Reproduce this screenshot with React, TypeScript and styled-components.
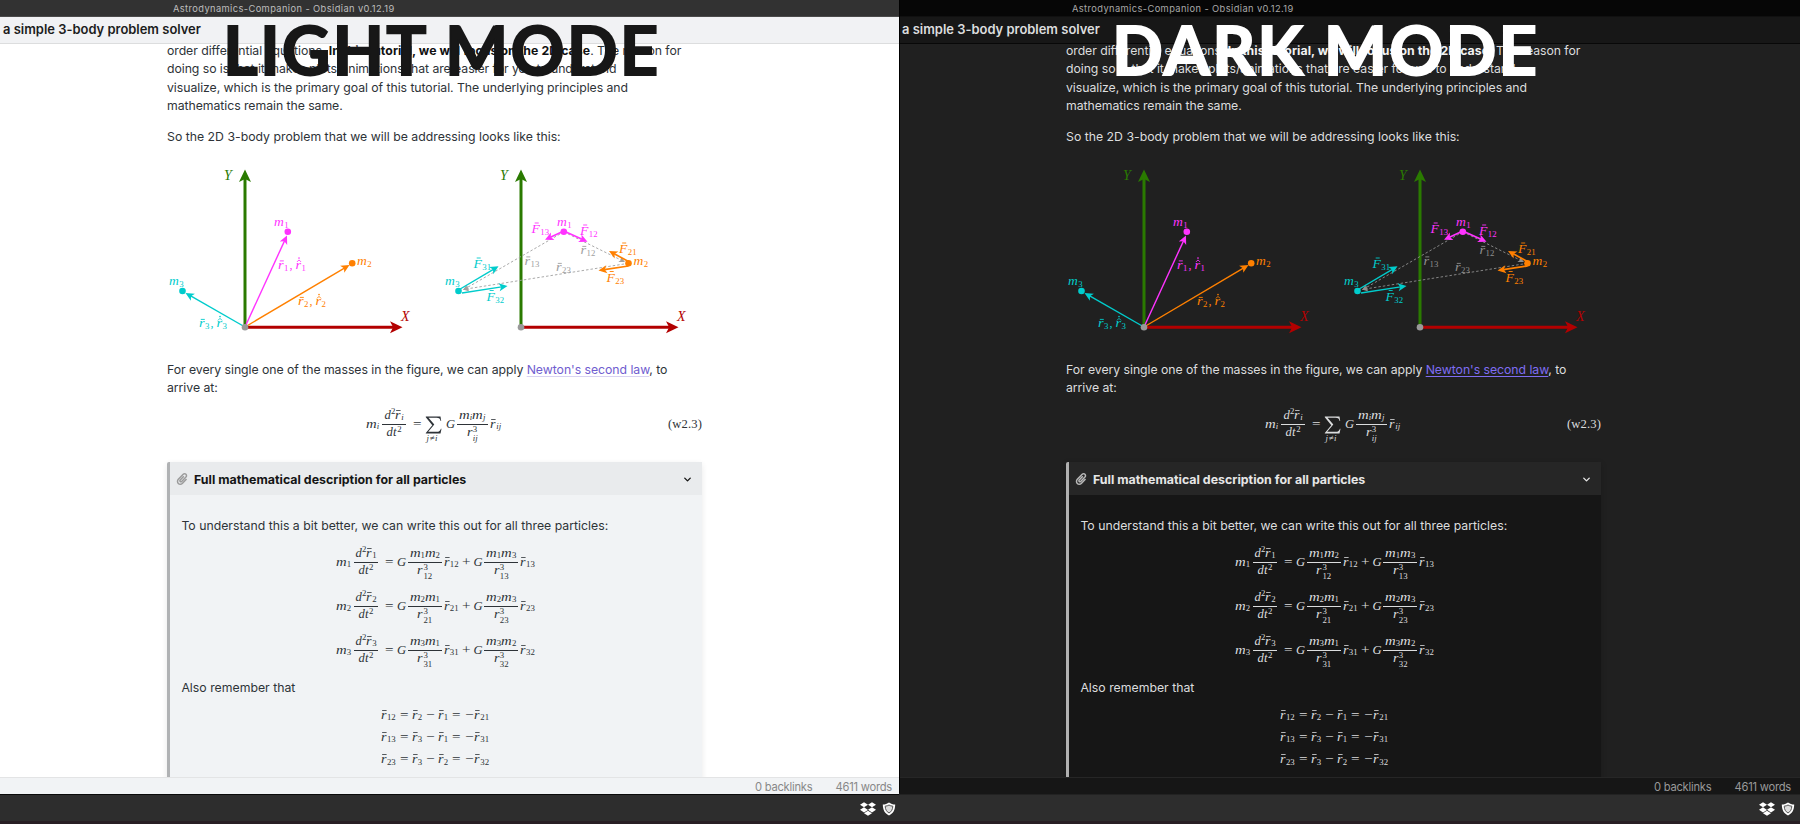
import React from "react";
import styled, { createGlobalStyle, ThemeProvider } from "styled-components";
import { FaDropbox, FaPaperclip } from "react-icons/fa";
import { ChevronDown } from "lucide-react";

const light = {
  title: "#323232", titleText: "#bdbdbd", titleLine: "#4a4a4a", header: "#f1f2f4", headerText: "#1c1c1c", headerLine: "#dcddde",
  bg: "#ffffff", text: "#2e3338", bold: "#111111", link: "#705dcf", underline: "#d9d3f2",
  card: "#f1f3f5", cardHead: "#e9ebed", cardBar: "#b0b2b4", cardTitle: "#151515", clip: "#9b9b9b",
  shadow: "0 2px 6px rgba(0,0,0,.09)", status: "#f1f3f5", statusLine: "#e3e4e5", statusText: "#888888",
  banner: "#171717", divider: "transparent", taskLine: "#0a0a0a", dash: "#a0a0a0", inset: 0,
};
const dark: typeof light = {
  title: "#060606", titleText: "#a8a8a8", titleLine: "#101010", header: "#171717", headerText: "#dcddde", headerLine: "#080808",
  bg: "#202020", text: "#dcddde", bold: "#f2f2f2", link: "#7f6df2", underline: "#7f6df2",
  card: "#161616", cardHead: "#262626", cardBar: "#b0b0b0", cardTitle: "#e6e6e6", clip: "#b8b8b8",
  shadow: "0 2px 6px rgba(0,0,0,.2)", status: "#161616", statusLine: "#262626", statusText: "#999999",
  banner: "#ffffff", divider: "#000000", taskLine: "#222222", dash: "#8f8f8f", inset: 2,
};
type Skin = typeof light;

const Global = createGlobalStyle`
  * { box-sizing: border-box; }
  body { margin: 0; width: 1800px; height: 824px; overflow: hidden; font-family: Inter, "Liberation Sans", sans-serif; }
`;
const Screen = styled.div`display: flex; width: 1800px; height: 824px; overflow: hidden;`;
const Window = styled.section<{ $w: number; theme: Skin }>`
  position: relative; display: flex; flex-direction: column; width: ${p => p.$w}px; height: 824px; overflow: hidden;
  background: ${p => p.theme.bg}; color: ${p => p.theme.text};
`;
const TitleBar = styled.div<{ theme: Skin }>`
  flex: none; height: 17px; padding-left: 173px; line-height: 18px; font-size: 9.3px; letter-spacing: .4px; white-space: nowrap;
  background: ${p => p.theme.title}; color: ${p => p.theme.titleText}; border-bottom: 1px solid ${p => p.theme.titleLine};
`;
const Header = styled.div<{ theme: Skin }>`
  flex: none; height: 27px; padding-left: 3px; line-height: 25px; font-size: 12.95px; font-weight: 600; white-space: nowrap;
  background: ${p => p.theme.header}; color: ${p => p.theme.headerText}; border-bottom: 1px solid ${p => p.theme.headerLine};
`;
const Article = styled.main`flex: 1; min-height: 0; margin-left: 167px; width: 535px; clip-path: inset(0 -12px 0 -12px);`;
const P = styled.p<{ $top?: number; $ls?: number; theme: Skin }>`
  margin: ${p => p.$top || 0}px 0 0; font-size: 12.29px; line-height: 18.33px; letter-spacing: ${p => p.$ls || 0}px; white-space: nowrap;
  b { color: ${p => p.theme.bold}; font-weight: 700; letter-spacing: .07px; }
`;
const Link = styled.a<{ theme: Skin }>`color: ${p => p.theme.link}; text-decoration: underline; text-decoration-color: ${p => p.theme.underline}; text-underline-offset: 2px;`;
const Figure = styled.svg`display: block; width: 534px; height: 195px; margin-top: 5.7px; overflow: visible;`;
const Card = styled.section<{ theme: Skin }>`
  height: 340px; margin-top: 12.5px; border-left: 3px solid ${p => p.theme.cardBar}; border-radius: 2px; background: ${p => p.theme.card}; box-shadow: ${p => p.theme.shadow};
`;
const CardHead = styled.header<{ theme: Skin }>`
  display: flex; align-items: center; height: 33px; padding: 1px 9px 0 5.5px; background: ${p => p.theme.cardHead}; color: ${p => p.theme.cardTitle};
  font-size: 12.42px; font-weight: 700; white-space: nowrap;
  .clip { color: ${p => p.theme.clip}; margin-right: 6.5px; }
  .chev { margin-left: auto; }
`;
const CardBody = styled.div`padding: 21.3px 0 0 11.4px;`;
const Derivation = styled.div<{ $top: number }>`padding-top: ${p => p.$top}px;`;
const Status = styled.footer<{ theme: Skin }>`
  flex: none; display: flex; justify-content: flex-end; gap: 23px; height: 17px; line-height: 18px; padding-right: ${p => 7 + p.theme.inset}px; font-size: 11.2px; letter-spacing: -.23px; white-space: nowrap;
  background: ${p => p.theme.status}; border-top: 1px solid ${p => p.theme.statusLine}; color: ${p => p.theme.statusText};
`;
const Task = styled.div<{ theme: Skin }>`
  flex: none; display: flex; align-items: center; justify-content: flex-end; gap: 6px; height: 30px; padding: 1px ${p => 3 + p.theme.inset}px 0 0; background: #2d2d2d; color: #fff; border-top: 1px solid ${p => p.theme.taskLine}; border-bottom: 3px solid #281f24;
`;
const Divider = styled.i<{ theme: Skin }>`position: absolute; left: 0; top: 0; width: 1px; height: 793px; background: ${p => p.theme.divider};`;
const Banner = styled.h1<{ $x: number; theme: Skin }>`
  position: absolute; left: ${p => p.$x}px; top: 1px; margin: 0; font: 700 67px/96px Lato, sans-serif; letter-spacing: 2.1px;
  -webkit-text-stroke: 1.8px ${p => p.theme.banner}; color: ${p => p.theme.banner}; white-space: nowrap;
`;

/* math typesetting */
const Eq = styled.div<{ $h: number; $left: number; $drop?: number }>`
  display: flex; align-items: center; height: ${p => p.$h}px; padding: ${p => p.$drop || 0}px 0 0 ${p => p.$left}px; font: 12.6px/16px "Liberation Serif", serif;
`;
const Glyph = styled.span<{ $w: number; $sx?: number; $up?: boolean; $ml?: number }>`
  flex: none; display: inline-block; width: ${p => p.$w}px; margin: -2px 0 0 ${p => p.$ml || 0}px; font-style: ${p => (p.$up ? "normal" : "italic")};
  transform: scaleX(${p => p.$sx || 1}); transform-origin: 0 50%; white-space: nowrap;
`;
const SubText = styled.span<{ $it?: boolean }>`
  flex: none; margin-top: 3px; font-size: 8.8px; line-height: 10px; font-style: ${p => (p.$it ? "italic" : "normal")};
`;
const SupText = styled(SubText)`margin-top: -9px;`;
const Stack = styled.span<{ $it?: boolean }>`
  display: flex; flex-direction: column; margin-left: 1px; font-size: 8.8px; line-height: 8.6px; margin-top: 1px;
  i { font-style: ${p => (p.$it ? "italic" : "normal")}; }
  span { font-style: normal; }
`;
const Barred = styled(Glyph)`
  position: relative;
  &::before { content: ""; position: absolute; left: 1px; top: 3px; width: 4px; height: 1px; background: currentColor; opacity: .8; }
`;
const Fraction = styled.span<{ $w: number; $ml: number }>`
  flex: none; display: flex; flex-direction: column; width: ${p => p.$w}px; margin-left: ${p => p.$ml}px;
  > span { display: flex; align-items: center; justify-content: center; height: 17px; }
  > span:first-child { border-bottom: 1px solid currentColor; }
`;
const SumBox = styled.span`
  flex: none; position: relative; width: 17px; height: 18px; margin-left: 4px; 
  svg { display: block; }
  small { position: absolute; left: 1px; top: 17px; font: italic 8.8px/10px "Liberation Serif", serif; letter-spacing: .6px; white-space: nowrap; }
`;
const Tag = styled.span`margin-left: auto; margin-top: -2px; font-size: 12.6px; letter-spacing: .15px;`;

const M = ({ s, it }: { s: string; it?: boolean }) => <><Glyph $w={10.8} $sx={1.17}>m</Glyph><SubText $it={it}>{s}</SubText></>;
const R = ({ s, ml, it }: { s: string; ml?: number; it?: boolean }) => <><Barred $w={5.9} $ml={ml} $sx={1.12}>r</Barred><SubText $it={it}>{s}</SubText></>;
const Acc = ({ s, it }: { s: string; it?: boolean }) => (
  <Fraction $w={24.7} $ml={2.5}>
    <span><Glyph $w={6.6}>d</Glyph><SupText>2</SupText><R s={s} it={it} /></span>
    <span><Glyph $w={6.4}>d</Glyph><Glyph $w={4.2}>t</Glyph><SupText>2</SupText></span>
  </Fraction>
);
const Mass = ({ a, b, s, w, it }: { a: string; b: string; s: string; w: number; it?: boolean }) => (
  <Fraction $w={w} $ml={1.4}>
    <span><M s={a} it={it} /><M s={b} it={it} /></span>
    <span><Glyph $w={5} $sx={1.12}>r</Glyph><Stack $it={it}><span>3</span><i>{s}</i></Stack></span>
  </Fraction>
);
const Op = ({ c, ml, w = 8.5 }: { c: string; ml: number; w?: number }) => <Glyph $up $w={w} $ml={ml} $sx={1.2}>{c}</Glyph>;
const G = ({ ml }: { ml: number }) => <Glyph $w={9.2} $ml={ml}>G</Glyph>;

const Particle = ({ n, o, q }: { n: string; o: string; q: string }) => (
  <Eq $h={44.1} $left={154.6} $drop={3}>
    <M s={n} /><Acc s={n} /><Op c="=" ml={6.8} /><G ml={3.3} /><Mass a={n} b={o} s={n + o} w={34.5} />
    <R s={n + o} ml={1.8} /><Op c="+" ml={3.6} /><G ml={2.8} /><Mass a={n} b={q} s={n + q} w={34.3} /><R s={n + q} ml={1.8} />
  </Eq>
);
const Relation = ({ a, b }: { a: string; b: string }) => (
  <Eq $h={22.2} $left={199.6}>
    <R s={a + b} /><Op c="=" ml={4} /><R s={b} ml={3.8} /><Op c="−" ml={4} /><R s={a} ml={3} /><Op c="=" ml={4} /><Op c="−" ml={4.6} /><R s={b + a} ml={0.8} />
  </Eq>
);

/* vector diagrams */
const pink = "#ff33ff", orange = "#ff8000", cyan = "#00cccc", green = "#2a7a00", red = "#b30000";
const Arrow = ({ a, b, c, w = 1.4, h = 8.5, dash }: { a: number[]; b: number[]; c: string; w?: number; h?: number; dash?: boolean }) => {
  const ang = Math.atan2(b[1] - a[1], b[0] - a[0]);
  const ex = b[0] - Math.cos(ang) * h * 0.7, ey = b[1] - Math.sin(ang) * h * 0.7;
  return (
    <g>
      <line x1={a[0]} y1={a[1]} x2={ex} y2={ey} stroke={c} strokeWidth={w} strokeDasharray={dash ? "2.5 2" : undefined} />
      <path transform={`translate(${b[0]} ${b[1]}) rotate(${(ang * 180) / Math.PI})`} fill={c} d={`M0 0L${-h} ${-h * 0.48}L${-h * 0.75} 0L${-h} ${h * 0.48}Z`} />
    </g>
  );
};
const Label = ({ x, y, c, t, s, bar }: { x: number; y: number; c: string; t: string; s?: string; bar?: boolean }) => {
  const w = t === "m" ? 9.8 : t === "F" ? 8.4 : t === "r" ? 5.6 : 9;
  return (
    <g fill={c} stroke="none" fontFamily='"Liberation Serif", serif'>
      <text x={x} y={y} fontSize={s ? 12.4 : 14} fontStyle="italic" textLength={s ? w : undefined} lengthAdjust="spacingAndGlyphs">{t}</text>
      {s && <text x={x + w + 0.4} y={y + 2} fontSize="8.8">{s}</text>}
      {bar && <line x1={x + w / 2 - 1} x2={x + w / 2 + 3} y1={y - (t === "F" ? 10 : 7.6)} y2={y - (t === "F" ? 10 : 7.6)} stroke={c} strokeWidth=".9" />}
    </g>
  );
};
const State = ({ x, y, c, s }: { x: number; y: number; c: string; s: string }) => (
  <g fill={c}>
    <Label x={x} y={y} c={c} t="r" s={s} bar />
    <text x={x + 11.5} y={y} fontSize="12" fontFamily='"Liberation Serif", serif'>,</text>
    <Label x={x + 17.5} y={y} c={c} t="r" s={s} />
    <path d={`M${x + 19} ${y - 6.6}l2-2 2 2`} fill="none" stroke={c} strokeWidth=".9" /><circle cx={x + 21} cy={y - 10.4} r=".8" />
  </g>
);
const Axes = ({ x }: { x: number }) => (
  <g>
    <Arrow a={[x, 327.3]} b={[x + 157.5, 327.3]} c={red} w={3} h={12.5} />
    <Arrow a={[x, 327.3]} b={[x, 169.5]} c={green} w={3} h={12.5} />
    <Label x={x - 21} y={180} c={green} t="Y" /><Label x={x + 156} y={321} c={red} t="X" />
  </g>
);
const Dot = ({ p, c }: { p: number[]; c: string }) => <circle cx={p[0]} cy={p[1]} r="3.3" fill={c} />;
const Diagram = ({ dash }: { dash: string }) => (
  <Figure viewBox="167 152 534 195">
    <Axes x={245} />
    <Arrow a={[245, 327]} b={[287, 235.5]} c={pink} /><Arrow a={[245, 327]} b={[349.5, 265]} c={orange} /><Arrow a={[245, 327]} b={[185.5, 293]} c={cyan} />
    <Dot p={[245, 327.3]} c="#999" /><Dot p={[287.8, 231.8]} c={pink} /><Dot p={[352.2, 263.3]} c={orange} /><Dot p={[182.5, 291]} c={cyan} />
    <Label x={274} y={226} c={pink} t="m" s="1" /><Label x={357} y={264.5} c={orange} t="m" s="2" /><Label x={169} y={285} c={cyan} t="m" s="3" />
    <State x={278} y={268.5} c={pink} s="1" /><State x={298} y={305} c={orange} s="2" /><State x={199} y={327} c={cyan} s="3" />
    <Axes x={521} />
    <Arrow a={[563.8, 231.8]} b={[463, 290]} c={dash} w={0.9} h={6} dash /><Arrow a={[628.5, 263.3]} b={[463, 289.5]} c={dash} w={0.9} h={6} dash /><Arrow a={[563.8, 231.8]} b={[625, 262]} c={dash} w={0.9} h={6} dash />
    <Arrow a={[563.8, 231]} b={[545, 239.8]} c={pink} w={1.7} /><Arrow a={[563.8, 231]} b={[587.5, 241.8]} c={pink} w={1.7} />
    <Arrow a={[628.5, 261.5]} b={[609, 251]} c={orange} w={1.7} /><Arrow a={[628.5, 266]} b={[598.5, 270.5]} c={orange} w={1.7} />
    <Arrow a={[458.5, 290]} b={[498.5, 266.3]} c={cyan} /><Arrow a={[462, 293]} b={[507.5, 286]} c={cyan} />
    <Dot p={[521, 327.3]} c="#999" /><Dot p={[563.8, 231.8]} c={pink} /><Dot p={[628.5, 263.3]} c={orange} /><Dot p={[458.5, 291]} c={cyan} />
    <Label x={557} y={226} c={pink} t="m" s="1" /><Label x={633.5} y={264.5} c={orange} t="m" s="2" /><Label x={445} y={284.5} c={cyan} t="m" s="3" />
    <Label x={531.5} y={233} c={pink} t="F" s="13" bar /><Label x={580} y={235} c={pink} t="F" s="12" bar />
    <Label x={619} y={253} c={orange} t="F" s="21" bar /><Label x={606.5} y={281.5} c={orange} t="F" s="23" bar />
    <Label x={473.5} y={268} c={cyan} t="F" s="31" bar /><Label x={486.5} y={300.5} c={cyan} t="F" s="32" bar />
    <Label x={580.5} y={254} c={dash} t="r" s="12" bar /><Label x={524.5} y={264.5} c={dash} t="r" s="13" bar /><Label x={556} y={271} c={dash} t="r" s="23" bar />
  </Figure>
);

const Shield = () => (
  <svg width="14" height="14" viewBox="0 0 14 14">
    <path d="M7 .5C5.3 1.8 3 2.5.8 2.6 1 8 2.5 11.3 7 13.6 11.5 11.3 13 8 13.2 2.6 11 2.5 8.7 1.8 7 .5Z" fill="#fff" />
    <path d="M7 3C6 3.7 4.6 4.1 3.2 4.2 3.4 7.5 4.4 9.5 7 11 9.6 9.5 10.6 7.5 10.8 4.2 9.4 4.1 8 3.7 7 3Z" fill="#ddd" stroke="#555" strokeWidth="1" />
  </svg>
);

const Pane = ({ skin, w, label, x }: { skin: Skin; w: number; label: string; x: number }) => (
  <ThemeProvider theme={skin}>
    <Window $w={w}>
      <TitleBar>Astrodynamics-Companion - Obsidian v0.12.19</TitleBar>
      <Header>a simple 3-body problem solver</Header>
      <Article>
        <P $top={-2} $ls={-0.06}>order differential equations. <b>In this tutorial, we will focus on the 2D case</b>. The reason for<br />doing so is that it makes plots/animations that are easier for you to understand<br />visualize, which is the primary goal of this tutorial. The underlying principles and<br />mathematics remain the same.</P>
        <P $top={13}>So the 2D 3-body problem that we will be addressing looks like this:</P>
        <Diagram dash={skin.dash} />
        <P $top={13.8} $ls={-0.055}>For every single one of the masses in the figure, we can apply <Link>Newton's second law</Link>, to<br />arrive at:</P>
        <Eq $h={52} $left={199} $drop={2.4}>
          <M s="i" it /><Acc s="i" it /><Op c="=" ml={6.5} />
          <SumBox>
            <svg width="17" height="18" viewBox="0 0 17 18"><path d="M.8.5H15.5L16.2 5H15.6C15.2 2.5 14.2 1.7 11.5 1.7H3.5L9.3 8.5 3.2 15.8H11.5C14.2 15.8 15.3 14.8 15.9 12.7H16.5L15.5 17.5H.8V17L7.3 9.2.8 1.2Z" fill="currentColor" /></svg>
            <small>j≠i</small>
          </SumBox>
          <G ml={3.5} /><Mass a="i" b="j" s="ij" w={31.5} it /><R s="ij" ml={2.3} it />
          <Tag>(w2.3)</Tag>
        </Eq>
        <Card>
          <CardHead><FaPaperclip className="clip" size={12} />Full mathematical description for all particles<ChevronDown className="chev" size={11} strokeWidth={3} /></CardHead>
          <CardBody>
            <P>To understand this a bit better, we can write this out for all three particles:</P>
            <Derivation $top={4.1}><Particle n="1" o="2" q="3" /><Particle n="2" o="1" q="3" /><Particle n="3" o="1" q="2" /></Derivation>
            <P $top={7.8}>Also remember that</P>
            <Derivation $top={7.3}><Relation a="1" b="2" /><Relation a="1" b="3" /><Relation a="2" b="3" /></Derivation>
          </CardBody>
        </Card>
      </Article>
      <Status><span>0 backlinks</span><span>4611 words</span></Status>
      <Task><FaDropbox size={16} /><Shield /></Task>
      <Divider />
      <Banner $x={x}>{label}</Banner>
    </Window>
  </ThemeProvider>
);

export default function App() {
  return (
    <Screen>
      <Global />
      <Pane skin={light} w={899} label="LIGHT MODE" x={223} />
      <Pane skin={dark} w={901} label="DARK MODE" x={213} />
    </Screen>
  );
}
